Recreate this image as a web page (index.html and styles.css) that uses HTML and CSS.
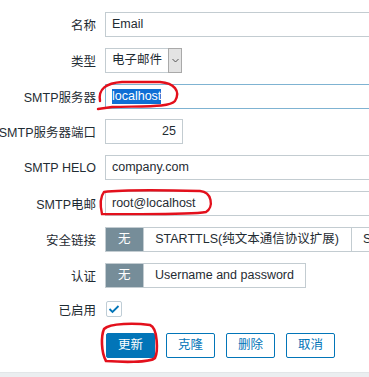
FILE: index.html
```html
<!DOCTYPE html>
<html lang="zh">
<head>
<meta charset="utf-8">
<title>Media type</title>
<link rel="stylesheet" href="styles.css">
</head>
<body>
<div class="page">
  <div class="form">
    <div class="row">
      <div class="label">名称</div>
      <div class="field"><div class="input wide">Email</div></div>
    </div>
    <div class="row">
      <div class="label">类型</div>
      <div class="field">
        <div class="select"><span class="select-text">电子邮件</span><span class="select-arrow"><svg width="7" height="5" viewBox="0 0 7 5"><path d="M0.5 1 L3.5 4 L6.5 1" fill="none" stroke="#555" stroke-width="1"/></svg></span></div>
      </div>
    </div>
    <div class="row">
      <div class="label">SMTP服务器</div>
      <div class="field"><div class="input wide focused"><span class="selected">localhost</span></div></div>
    </div>
    <div class="row">
      <div class="label">SMTP服务器端口</div>
      <div class="field"><div class="input port">25</div></div>
    </div>
    <div class="row">
      <div class="label">SMTP HELO</div>
      <div class="field"><div class="input wide">company.com</div></div>
    </div>
    <div class="row">
      <div class="label">SMTP电邮</div>
      <div class="field"><div class="input wide">root@localhost</div></div>
    </div>
    <div class="row">
      <div class="label">安全链接</div>
      <div class="field">
        <div class="segmented">
          <span class="seg seg-on">无</span>
          <span class="seg seg-long">STARTTLS(纯文本通信协议扩展)</span>
          <span class="seg">SSL/TLS</span>
        </div>
      </div>
    </div>
    <div class="row">
      <div class="label">认证</div>
      <div class="field">
        <div class="segmented">
          <span class="seg seg-on">无</span>
          <span class="seg">Username and password</span>
        </div>
      </div>
    </div>
    <div class="row row-check">
      <div class="label">已启用</div>
      <div class="field">
        <span class="checkbox"><svg width="12" height="10" viewBox="0 0 12 10"><path d="M1.5 5 L4.5 8 L10.5 2" fill="none" stroke="#0275b8" stroke-width="1.8"/></svg></span>
      </div>
    </div>
    <div class="row row-buttons">
      <div class="label"></div>
      <div class="field buttons">
        <button class="btn btn-primary">更新</button>
        <button class="btn">克隆</button>
        <button class="btn">删除</button>
        <button class="btn">取消</button>
      </div>
    </div>
  </div>
  <div class="footer"></div>
  <svg class="marks" width="369" height="377" viewBox="0 0 369 377">
    <path d="M100 101 C98 89 106 83 122 82 L160 82 C174 83 181 91 175 101 C170 107 150 106 112 107 L98 109" fill="none" stroke="#e3101c" stroke-width="2.4" stroke-linecap="round"/>
    <path d="M104 192 C120 190 160 190 200 191 C212 192 214 207 206 212 C190 215 140 214 102 214 C100 205 100 197 104 192" fill="none" stroke="#e3101c" stroke-width="2.4" stroke-linecap="round"/>
    <path d="M104 329 C110 323 135 323 150 325 C158 328 158 352 155 358 C150 363 120 362 106 361 C101 352 101 336 104 329" fill="none" stroke="#e3101c" stroke-width="2.6" stroke-linecap="round"/>
  </svg>
</div>
</body>
</html>
```

FILE: styles.css
```css
html, body {
  margin: 0;
  padding: 0;
  overflow: hidden;
  background: #ffffff;
}

.page {
  position: relative;
  width: 369px;
  height: 377px;
  overflow: hidden;
  font-family: "Liberation Sans", "Noto Sans CJK SC", sans-serif;
  font-size: 12.5px;
  color: #1f2c33;
}

.form {
  display: flex;
  flex-direction: column;
  gap: 10.8px;
  padding-top: 12px;
}

.row {
  display: grid;
  grid-template-columns: 96px 1fr;
  column-gap: 9px;
  align-items: center;
  height: 25px;
}

.label {
  display: flex;
  justify-content: flex-end;
  white-space: nowrap;
  min-width: 0;
}

.field {
  display: flex;
  align-items: center;
  min-width: 0;
}

.input {
  box-sizing: border-box;
  height: 25px;
  line-height: 23px;
  border: 1px solid #c3ccd1;
  padding: 0 6px;
  background: #fff;
  white-space: nowrap;
}

.wide {
  width: 290px;
  flex: none;
}

.focused {
  border-color: #7fb3d2;
}

.selected {
  background: #0f6fd5;
  color: #fff;
  display: inline-block;
  line-height: 15px;
}

.port {
  width: 78px;
  text-align: right;
}

.select {
  box-sizing: border-box;
  display: flex;
  height: 25px;
  width: 77px;
  border: 1px solid #c3ccd1;
  background: #fff;
}

.select-text {
  flex: 1;
  line-height: 23px;
  padding-left: 6px;
  white-space: nowrap;
}

.select-arrow {
  box-sizing: border-box;
  width: 14px;
  margin: -1px -1px -1px 0;
  height: 25px;
  background: #e3e3e3;
  border: 1px solid #a9a9a9;
  display: flex;
  align-items: center;
  justify-content: center;
}

.segmented {
  display: flex;
  height: 25px;
  box-sizing: border-box;
  border: 1px solid #c3ccd1;
  white-space: nowrap;
  flex: none;
}

.seg {
  line-height: 23px;
  padding: 0 11.5px;
  border-left: 1px solid #c3ccd1;
  background: #fff;
  text-align: center;
}

.seg:first-child {
  border-left: none;
}

.seg-on {
  background: #768d99;
  color: #fff;
  padding: 0 12px;
}

.seg-long {
  box-sizing: border-box;
  min-width: 208px;
  padding: 0 11px;
}

.row-check {
  height: 22px;
}

.checkbox {
  box-sizing: border-box;
  width: 16px;
  height: 16px;
  margin-left: 1px;
  border: 1px solid #bfcdd6;
  border-radius: 2px;
  display: flex;
  align-items: center;
  justify-content: center;
  background: #fff;
}

.row-buttons {
  margin-top: 1.8px;
}

.buttons {
  gap: 11px;
  padding-left: 1px;
}

.btn {
  box-sizing: border-box;
  height: 25px;
  padding: 0 11px;
  border: 1px solid #0275b8;
  border-radius: 2px;
  background: #fff;
  color: #0275b8;
  font-family: "Liberation Sans", "Noto Sans CJK SC", sans-serif;
  font-size: 12.5px;
  line-height: 23px;
  margin: 0;
}

.btn-primary {
  background: #0275b8;
  color: #fff;
}

.footer {
  margin-top: 14px;
  height: 10px;
  background: #ebeef0;
  border-top: 1px solid #e2e6e8;
}

.marks {
  position: absolute;
  left: 0;
  top: 0;
  pointer-events: none;
}
```
